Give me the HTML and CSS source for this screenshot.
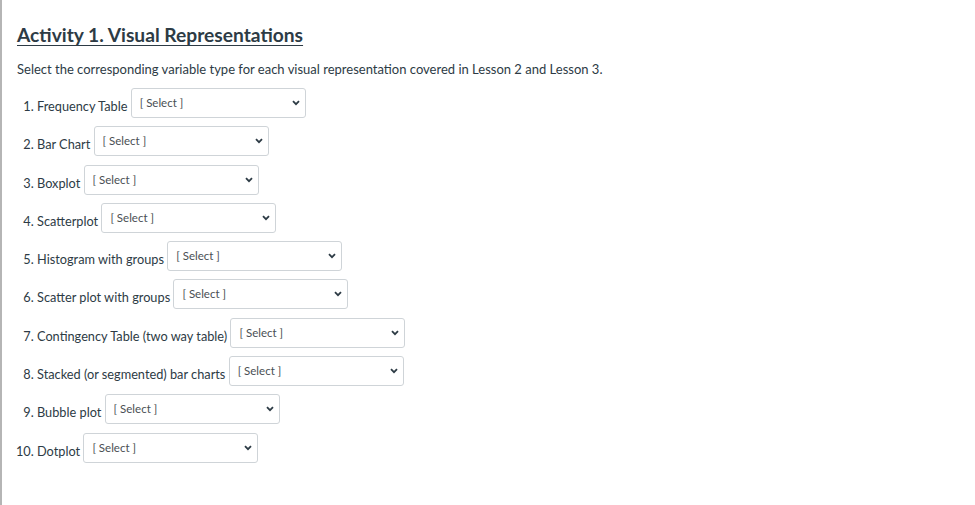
FILE: index.html
```
<!DOCTYPE html>
<html>
<head>
<meta charset="utf-8">
<link rel="stylesheet" href="styles.css">
</head>
<body>
<div class="page">
  <h2 class="title">Activity 1. Visual Representations</h2>
  <p class="intro">Select the corresponding variable type for each visual representation covered in Lesson 2 and Lesson 3.</p>
  <ol class="items">
    <li>Frequency Table <span class="sel"><select><option>[ Select ]</option></select><svg class="chev" viewBox="0 0 8 6" width="8" height="6"><path d="M1 1.2 L4 4.2 L7 1.2" fill="none" stroke="#2d3b45" stroke-width="1.8"/></svg></span></li>
    <li>Bar Chart <span class="sel"><select><option>[ Select ]</option></select><svg class="chev" viewBox="0 0 8 6" width="8" height="6"><path d="M1 1.2 L4 4.2 L7 1.2" fill="none" stroke="#2d3b45" stroke-width="1.8"/></svg></span></li>
    <li>Boxplot <span class="sel"><select><option>[ Select ]</option></select><svg class="chev" viewBox="0 0 8 6" width="8" height="6"><path d="M1 1.2 L4 4.2 L7 1.2" fill="none" stroke="#2d3b45" stroke-width="1.8"/></svg></span></li>
    <li>Scatterplot <span class="sel"><select><option>[ Select ]</option></select><svg class="chev" viewBox="0 0 8 6" width="8" height="6"><path d="M1 1.2 L4 4.2 L7 1.2" fill="none" stroke="#2d3b45" stroke-width="1.8"/></svg></span></li>
    <li>Histogram with groups <span class="sel"><select><option>[ Select ]</option></select><svg class="chev" viewBox="0 0 8 6" width="8" height="6"><path d="M1 1.2 L4 4.2 L7 1.2" fill="none" stroke="#2d3b45" stroke-width="1.8"/></svg></span></li>
    <li>Scatter plot with groups <span class="sel"><select><option>[ Select ]</option></select><svg class="chev" viewBox="0 0 8 6" width="8" height="6"><path d="M1 1.2 L4 4.2 L7 1.2" fill="none" stroke="#2d3b45" stroke-width="1.8"/></svg></span></li>
    <li>Contingency Table (two way table) <span class="sel"><select><option>[ Select ]</option></select><svg class="chev" viewBox="0 0 8 6" width="8" height="6"><path d="M1 1.2 L4 4.2 L7 1.2" fill="none" stroke="#2d3b45" stroke-width="1.8"/></svg></span></li>
    <li>Stacked (or segmented) bar charts <span class="sel"><select><option>[ Select ]</option></select><svg class="chev" viewBox="0 0 8 6" width="8" height="6"><path d="M1 1.2 L4 4.2 L7 1.2" fill="none" stroke="#2d3b45" stroke-width="1.8"/></svg></span></li>
    <li>Bubble plot <span class="sel"><select><option>[ Select ]</option></select><svg class="chev" viewBox="0 0 8 6" width="8" height="6"><path d="M1 1.2 L4 4.2 L7 1.2" fill="none" stroke="#2d3b45" stroke-width="1.8"/></svg></span></li>
    <li>Dotplot <span class="sel"><select><option>[ Select ]</option></select><svg class="chev" viewBox="0 0 8 6" width="8" height="6"><path d="M1 1.2 L4 4.2 L7 1.2" fill="none" stroke="#2d3b45" stroke-width="1.8"/></svg></span></li>
  </ol>
</div>
</body>
</html>
```
FILE: styles.css
```
html, body {
  margin: 0;
  padding: 0;
  background: #ffffff;
}
body {
  font-family: Lato, "Open Sans", sans-serif;
  color: #2d3b45;
}
.page {
  height: 505px;
  box-sizing: border-box;
  border-left: 2px solid #b5b5b5;
  padding: 20px 0 0 15px;
}
.title {
  margin: 0;
  font-size: 19.2px;
  font-weight: 700;
  line-height: 30px;
  text-decoration: underline;
  text-decoration-thickness: 1px;
  text-underline-offset: 3px;
  color: #2d3b45;
}
.intro {
  margin: 10px 0 0 0;
  font-size: 13px;
  line-height: 18px;
}
.items {
  margin: 9px 0 0 0;
  padding-left: 20px;
  font-size: 12.75px;
}
.items li {
  height: 38.3px;
  line-height: 38px;
}
.sel {
  position: relative;
  display: inline-block;
  vertical-align: 4px;
  line-height: normal;
}
.sel select {
  appearance: none;
  -webkit-appearance: none;
  width: 175px;
  height: 30px;
  box-sizing: border-box;
  border: 1px solid #cfd4d8;
  border-radius: 3px;
  background: #ffffff;
  padding: 0 20px 1px 8px;
  font-family: Lato, "Open Sans", sans-serif;
  font-size: 11.5px;
  color: #4a4f54;
}
.chev {
  position: absolute;
  right: 6px;
  top: 12px;
  pointer-events: none;
}
```
